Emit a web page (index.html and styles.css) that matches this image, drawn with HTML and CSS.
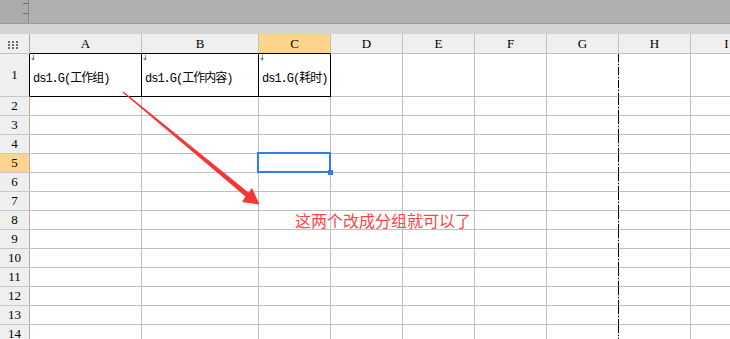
FILE: index.html
```html
<!DOCTYPE html>
<html>
<head>
  <title>报表设计</title>
  <link rel="stylesheet" href="styles.css">
</head>
<body>

  <div class="toolbar">
    <div class="grip"><i></i><i></i></div>
    <div class="bar"></div>
  </div>
  <div class="strip"></div>

  <div class="sheet">
    <table class="grid">
      <colgroup>
        <col class="w-head">
        <col class="w-a">
        <col class="w-b">
        <col class="w-n" span="7">
      </colgroup>

      <tr class="colhead">
        <th class="corner">
          <svg width="10" height="8" viewBox="0 0 10 8">
            <g fill="#6e6e6e">
              <rect x="0" y="0" width="2" height="2"/><rect x="4" y="0" width="2" height="2"/><rect x="8" y="0" width="2" height="2"/>
              <rect x="0" y="3" width="2" height="2"/><rect x="4" y="3" width="2" height="2"/><rect x="8" y="3" width="2" height="2"/>
              <rect x="0" y="6" width="2" height="2"/><rect x="4" y="6" width="2" height="2"/><rect x="8" y="6" width="2" height="2"/>
            </g>
          </svg>
        </th>
        <th class="edge">A</th>
        <th class="edge">B</th>
        <th class="edge cur">C</th>
        <th>D</th><th>E</th><th>F</th><th>G</th><th>H</th><th>I</th>
      </tr>

      <!-- 数据列 -->
      <tr class="tall">
        <th class="edge">1</th>
        <td class="field"><span class="mark"></span>ds1.G(工作组)</td>
        <td class="field"><span class="mark"></span>ds1.G(工作内容)</td>
        <td class="field"><span class="mark"></span>ds1.G(耗时)</td>
        <td></td><td></td><td></td><td class="pb"></td><td></td><td></td>
      </tr>

      <tr><th>2</th><td></td><td></td><td></td><td></td><td></td><td></td><td class="pb"></td><td></td><td></td></tr>
      <tr><th>3</th><td></td><td></td><td></td><td></td><td></td><td></td><td class="pb"></td><td></td><td></td></tr>
      <tr><th>4</th><td></td><td></td><td></td><td></td><td></td><td></td><td class="pb"></td><td></td><td></td></tr>
      <tr><th class="cur">5</th><td></td><td></td><td class="sel"></td><td></td><td></td><td></td><td class="pb"></td><td></td><td></td></tr>
      <tr><th>6</th><td></td><td></td><td></td><td></td><td></td><td></td><td class="pb"></td><td></td><td></td></tr>
      <tr><th>7</th><td></td><td></td><td></td><td></td><td></td><td></td><td class="pb"></td><td></td><td></td></tr>
      <tr><th>8</th><td></td><td></td><td></td><td></td><td></td><td></td><td class="pb"></td><td></td><td></td></tr>
      <tr><th>9</th><td></td><td></td><td></td><td></td><td></td><td></td><td class="pb"></td><td></td><td></td></tr>
      <tr><th>10</th><td></td><td></td><td></td><td></td><td></td><td></td><td class="pb"></td><td></td><td></td></tr>
      <tr><th>11</th><td></td><td></td><td></td><td></td><td></td><td></td><td class="pb"></td><td></td><td></td></tr>
      <tr><th>12</th><td></td><td></td><td></td><td></td><td></td><td></td><td class="pb"></td><td></td><td></td></tr>
      <tr><th>13</th><td></td><td></td><td></td><td></td><td></td><td></td><td class="pb"></td><td></td><td></td></tr>
      <tr><th>14</th><td></td><td></td><td></td><td></td><td></td><td></td><td class="pb"></td><td></td><td></td></tr>
    </table>
  </div>

  <!-- 标注 -->
  <svg class="arrow" width="730" height="339" viewBox="0 0 730 339">
    <polygon fill="#f33636" points="123.4,91.4 248.6,192.6 252,188 259.5,204.5 242,202 245.4,196.5 122.6,92.6"/>
  </svg>
  <p class="note">这两个改成分组就可以了</p>

</body>
</html>
```

FILE: styles.css
```css
body {
  margin: 0;
  width: 730px;
  height: 339px;
  overflow: hidden;
  position: relative;
  background-color: #fff;
  font-family: "Liberation Mono", "Noto Sans CJK SC", monospace;
  font-size: 12px;
  color: #000;
}

.toolbar {
  display: flex;
  height: 23px;
  background-color: #b0b0b0;
  border-bottom: 1px solid #999;
}

.grip {
  width: 28px;
  border-right: 1px solid #888;
  background-color: #acacac;
  position: relative;
}

.grip i {
  position: absolute;
  left: 23px;
  width: 5px;
  height: 1px;
  background-color: #6a6a6a;
}

.grip i:first-child { top: 3px; }
.grip i:last-child { top: 13px; }

.bar {
  flex: 1;
}

.strip {
  height: 10px;
  background-color: #d4d4d4;
}

.grid {
  table-layout: fixed;
  border-collapse: separate;
  border-spacing: 0;
  width: 763px;
}

.w-head { width: 30px; }
.w-a { width: 112px; }
.w-b { width: 117px; }
.w-n { width: 72px; }

.grid th,
.grid td {
  box-sizing: border-box;
  height: 19px;
  padding: 0;
  border-right: 1px solid #c0c0c0;
  border-bottom: 1px solid #c0c0c0;
}

.grid th {
  background-color: #efefef;
  font-family: "Liberation Serif", serif;
  font-size: 13px;
  font-weight: normal;
  text-align: center;
  border-right-color: #b0b0b0;
  border-bottom-color: #c8c8c8;
}

.colhead th {
  height: 20px;
  border-right-color: #c6c2b2;
  border-bottom-color: #c0c0c0;
}

.colhead th.corner {
  border-right-color: #a8a8a8;
  padding-top: 2px;
}

.corner svg {
  display: block;
  margin-left: 8px;
}

.grid th.cur {
  background-color: #fdd48e;
}

.colhead th.edge {
  border-bottom-color: #000;
}

.tall th,
.tall td {
  height: 43px;
}

.tall th.edge {
  border-right-color: #000;
}

.grid td.field {
  position: relative;
  padding: 3px 0 0 3px;
  border-right-color: #000;
  border-bottom-color: #000;
  letter-spacing: -1px;
  white-space: nowrap;
}

.mark {
  position: absolute;
  left: 3px;
  top: 1px;
  width: 1px;
  height: 4px;
  background-color: #888;
}

.mark::after {
  content: "";
  position: absolute;
  left: -2px;
  top: 3px;
  border-left: 2.5px solid transparent;
  border-right: 2.5px solid transparent;
  border-top: 3px solid #888;
}

.grid td.pb {
  border-right-color: transparent;
  background-image: repeating-linear-gradient(to bottom, #000 0 8px, #c0c0c0 8px 10px, #000 10px 11px, #c0c0c0 11px 13px);
  background-origin: border-box;
  background-position: right top;
  background-size: 1px 100%;
  background-repeat: no-repeat;
}

.grid td.sel {
  position: relative;
}

.sel::after {
  content: "";
  position: absolute;
  left: -2px;
  top: -2px;
  right: -1px;
  bottom: -1px;
  border: 2px solid #2f7fe6;
}

.sel::before {
  content: "";
  position: absolute;
  right: -3px;
  bottom: -3px;
  width: 5px;
  height: 5px;
  background-color: #2f7fe6;
  z-index: 1;
}

.arrow {
  position: absolute;
  left: 0;
  top: 0;
  pointer-events: none;
}

.note {
  position: absolute;
  left: 295px;
  top: 211px;
  margin: 0;
  font-family: "Noto Sans CJK SC", sans-serif;
  font-size: 16px;
  line-height: 18px;
  color: #f44;
}
```
